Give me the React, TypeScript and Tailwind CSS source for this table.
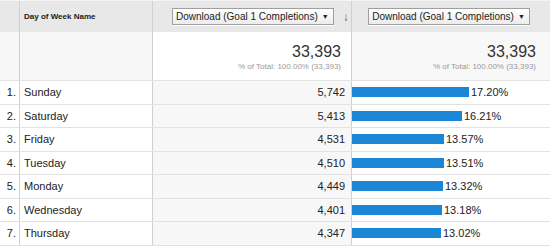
const ROWS = [
  { name: 'Sunday', value: '5,742', pct: 17.2 },
  { name: 'Saturday', value: '5,413', pct: 16.21 },
  { name: 'Friday', value: '4,531', pct: 13.57 },
  { name: 'Tuesday', value: '4,510', pct: 13.51 },
  { name: 'Monday', value: '4,449', pct: 13.32 },
  { name: 'Wednesday', value: '4,401', pct: 13.18 },
  { name: 'Thursday', value: '4,347', pct: 13.02 },
]

function MetricSelect() {
  return (
    <div className="flex h-[17px] shrink-0 items-center gap-[4px] whitespace-nowrap border border-[#a0a0a0] bg-gradient-to-b from-white to-[#ececec] pl-[3px] pr-[4px] text-[10px] leading-none text-[#222] shadow-[0_1px_0_#fff]">
      <span>Download (Goal 1 Completions)</span>
      <span className="text-[7px]">▼</span>
    </div>
  )
}

function Summary({ pad }: { pad: string }) {
  return (
    <div className={`flex flex-col items-end pt-[11px] ${pad}`}>
      <div className="text-[16px] leading-[18px] text-[#333]">33,393</div>
      <div className="mt-[1px] text-[8px] leading-[10px] text-[#999]">% of Total: 100.00% (33,393)</div>
    </div>
  )
}

export default function App() {
  return (
    <div className="h-[248px] w-[550px] overflow-hidden bg-white font-['Liberation_Sans',Arial,sans-serif] text-[11px] text-[#222]">
      {/* header */}
      <div className="grid h-[32px] grid-cols-[20px_133px_199px_198px] border-t border-[#f4f4f4] bg-[#e8e8e8]">
        <div className="border-r border-[#d0d0d0]" />
        <div className="flex items-center border-r border-[#d0d0d0] pl-[4px] text-[8px] font-bold">
          Day of Week Name
        </div>
        <div className="flex items-center border-r border-[#d0d0d0] pl-[19px]">
          <MetricSelect />
          <span className="ml-[9px] text-[12px] leading-none text-[#666]">↓</span>
        </div>
        <div className="flex items-center justify-center pr-[4px]">
          <MetricSelect />
        </div>
      </div>

      {/* summary */}
      <div className="grid h-[49px] grid-cols-[20px_133px_199px_198px] border-b border-[#e2e2e2]">
        <div className="border-r border-[#d0d0d0] bg-[#f7f7f7]" />
        <div className="border-r border-[#d0d0d0] bg-[#f7f7f7]" />
        <div className="border-r border-[#d0d0d0] bg-white">
          <Summary pad="pr-[10px]" />
        </div>
        <div className="bg-[#f8f8f8]">
          <Summary pad="pr-[14px]" />
        </div>
      </div>

      {/* rows */}
      {ROWS.map((r, i) => (
        <div
          key={r.name}
          className="grid h-[23.5px] grid-cols-[20px_133px_199px_198px] border-b border-[#e2e2e2]"
        >
          <div className="flex items-center justify-end border-r border-[#d0d0d0] pr-[3px]">{i + 1}.</div>
          <div className="flex items-center border-r border-[#d0d0d0] pl-[4px]">{r.name}</div>
          <div className="flex items-center justify-end border-r border-[#d0d0d0] bg-[#f7f7f7] pr-[6px]">
            {r.value}
          </div>
          <div className="flex items-center gap-[2px]">
            <div className="h-[10px] bg-[#1b86d6]" style={{ width: Math.round(r.pct * 6.8) }} />
            <span>{r.pct.toFixed(2)}%</span>
          </div>
        </div>
      ))}
    </div>
  )
}
